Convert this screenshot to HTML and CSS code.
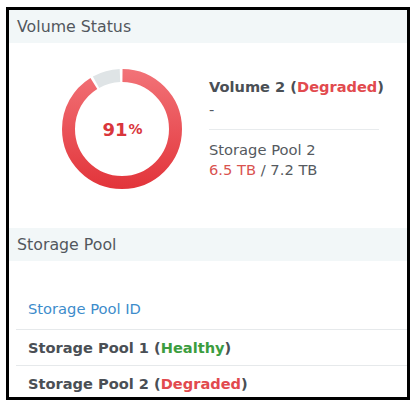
FILE: index.html
```html
<!DOCTYPE html>
<html>
<head>
<meta charset="utf-8">
<link rel="stylesheet" href="styles.css">
</head>
<body>
<div class="frame">
  <div class="section-head">Volume Status</div>
  <div class="volume">
    <div class="donut">
      <svg class="donut-svg" width="120" height="120" viewBox="0 0 120 120">
        <defs>
          <linearGradient id="redGrad" x1="120" y1="0" x2="0" y2="0" gradientUnits="userSpaceOnUse">
            <stop offset="0" stop-color="#f27378"/>
            <stop offset="1" stop-color="#e2343a"/>
          </linearGradient>
        </defs>
        <g transform="rotate(-90 60 60)">
          <circle cx="60" cy="60" r="53.5" fill="none" stroke="#dfe4e6" stroke-width="13" stroke-dasharray="25 311" stroke-dashoffset="-308.5"/>
          <circle cx="60" cy="60" r="53.5" fill="none" stroke="url(#redGrad)" stroke-width="13" stroke-dasharray="305.5 30.5" stroke-dashoffset="-0.5"/>
        </g>
      </svg>
      <div class="donut-label"><span class="pct-num">91</span><span class="pct-sign">%</span></div>
    </div>
    <div class="vol-info">
      <div class="vol-title">Volume 2 (<span class="red">Degraded</span>)</div>
      <div class="vol-desc">-</div>
      <div class="vol-sep"></div>
      <div class="vol-pool">Storage Pool 2</div>
      <div class="vol-size"><span class="red-light">6.5 TB</span> / 7.2 TB</div>
    </div>
  </div>
  <div class="section-head">Storage Pool</div>
  <div class="pool-list">
    <div class="pool-row pool-head">Storage Pool ID</div>
    <div class="pool-row pool-item">Storage Pool 1 (<span class="green">Healthy</span>)</div>
    <div class="pool-row pool-item">Storage Pool 2 (<span class="red">Degraded</span>)</div>
  </div>
</div>
</body>
</html>
```
FILE: styles.css
```css
html, body {
  margin: 0;
  padding: 0;
  background: #ffffff;
}
body {
  font-family: "DejaVu Sans", Verdana, sans-serif;
  color: #555a60;
}
.frame {
  margin: 7px 0 0 6px;
  width: 404px;
  height: 393px;
  box-sizing: border-box;
  border: 3px solid #000;
  overflow: hidden;
  background: #fff;
}
.section-head {
  height: 33px;
  line-height: 33px;
  background: #f2f7f8;
  padding-left: 8px;
  font-size: 15.8px;
  color: #52585e;
}
.volume {
  height: 185px;
  box-sizing: border-box;
  padding: 26px 0 0 53px;
  display: flex;
  align-items: flex-start;
  gap: 27px;
}
.donut {
  width: 120px;
  height: 120px;
  display: grid;
  flex: none;
}
.donut-svg, .donut-label {
  grid-area: 1 / 1;
}
.donut-label {
  display: flex;
  align-items: center;
  justify-content: center;
  color: #d9363c;
  font-weight: bold;
  padding-left: 1px;
}
.pct-num {
  font-size: 18px;
}
.pct-sign {
  font-size: 14px;
  margin-left: 1px;
}
.vol-info {
  padding-top: 8px;
  font-size: 14.7px;
  line-height: 20px;
}
.vol-title {
  font-weight: bold;
  font-size: 14.6px;
  color: #4a4f55;
  white-space: nowrap;
}
.vol-desc {
  margin-top: 3px;
}
.vol-sep {
  width: 170px;
  height: 1px;
  background: #e8ebed;
  margin: 9px 0 10px;
}
.vol-size {
  color: #555a60;
}
.red {
  color: #e24a4e;
}
.red-light {
  color: #d9534f;
}
.green {
  color: #3c9d3f;
}
.pool-list {
  margin-left: 7px;
  padding-top: 30px;
}
.pool-row {
  padding-left: 12px;
  line-height: 35px;
  border-bottom: 1px solid #e6e9eb;
  font-size: 14.7px;
  white-space: nowrap;
}
.pool-head {
  color: #3d8ccb;
  padding-bottom: 3px;
}
.pool-item {
  font-weight: bold;
  font-size: 14.6px;
  color: #4a4f55;
}
```
